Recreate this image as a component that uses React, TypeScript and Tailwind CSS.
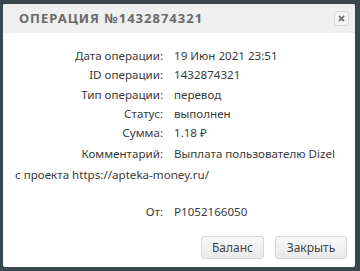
import React from "react";

const rows: [string, string][] = [
  ["Дата операции:", "19 Июн 2021 23:51"],
  ["ID операции:", "1432874321"],
  ["Тип операции:", "перевод"],
  ["Статус:", "выполнен"],
  ["Сумма:", "1.18 ₽"],
];

export default function App() {
  return (
    <div className="w-[360px] h-[271px] bg-[#37474f] pt-[4px] pl-[3px]" style={{ fontFamily: '"Noto Sans", sans-serif' }}>
      <div className="w-[352px] h-[263px] bg-white flex flex-col rounded-[2px] overflow-hidden">
        <div className="h-[29px] bg-[#efefef] flex items-center justify-between pl-[16px] pr-[6px]">
          <div className="text-[13px] font-bold tracking-[1px] text-[#6a6a6a]">ОПЕРАЦИЯ №1432874321</div>
          <div className="w-[15px] h-[15px] rounded-[3px] border border-[#d8d8d8] bg-[#f3f3f3] flex items-center justify-center">
            <svg width="7" height="7" viewBox="0 0 7 7"><path d="M1 1L6 6M6 1L1 6" stroke="#777" strokeWidth="1.8" /></svg>
          </div>
        </div>
        <div className="pt-[13px] pl-[12px] pr-[18px] text-[11.6px] leading-[19.3px] text-[#3a3a3a]">
          {rows.map(([l, v]) => (
            <div key={l} className="flex">
              <div className="w-[148px] text-right">{l}</div>
              <div className="pl-[11px]">{v}</div>
            </div>
          ))}
          <div className="leading-[21px] mt-[1px]">
            <span className="inline-block w-[148px] text-right">Комментарий:</span>
            <span className="pl-[11px]">Выплата пользователю Dizel с проекта https://apteka-money.ru/</span>
          </div>
          <div className="h-[17px]" />
          <div className="flex">
            <div className="w-[148px] text-right">От:</div>
            <div className="pl-[11px]">P1052166050</div>
          </div>
        </div>
        <div className="mt-auto mb-[8px] flex justify-end gap-[11px] pr-[8px]">
          <button className="w-[63px] h-[23px] rounded-[3px] border border-[#d6d6d6] bg-gradient-to-b from-[#f8f8f8] to-[#e9e9e9] text-[12px] text-[#444]">Баланс</button>
          <button className="w-[72px] h-[23px] rounded-[3px] border border-[#d6d6d6] bg-gradient-to-b from-[#f8f8f8] to-[#e9e9e9] text-[12px] text-[#444]">Закрыть</button>
        </div>
      </div>
    </div>
  );
}
